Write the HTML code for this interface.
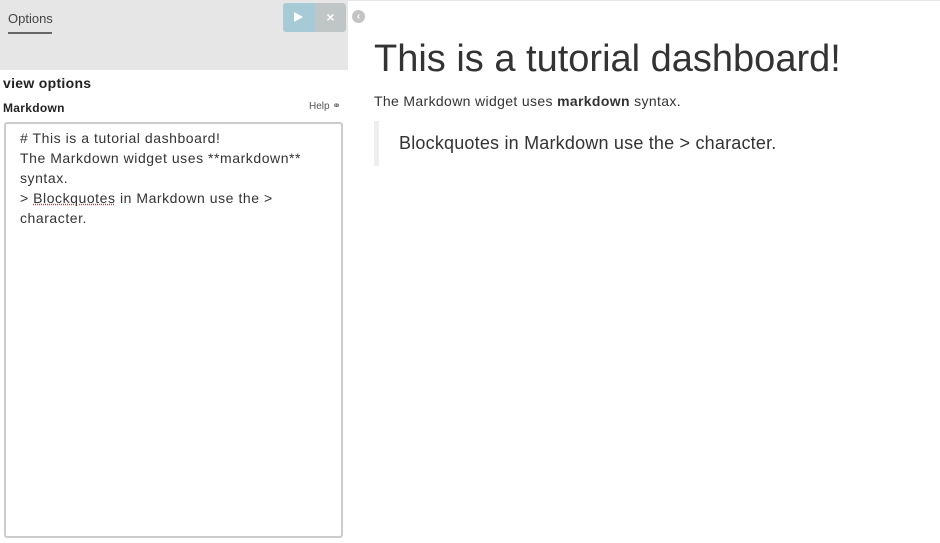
<!DOCTYPE html>
<html><head><style>
*{margin:0;padding:0;box-sizing:border-box}
body{width:940px;height:543px;background:#fff;font-family:"Liberation Sans",sans-serif;color:#333;position:relative;overflow:hidden}
.a{position:absolute}
</style></head><body>
<div class="a" style="left:0;top:0;width:348px;height:70px;background:#e6e6e6"></div>
<div class="a" style="left:348px;top:0;width:592px;height:1px;background:#e6e6e6"></div>
<div class="a" style="left:8px;top:11px;font-size:13px;color:#444">Options</div>
<div class="a" style="left:8px;top:32px;width:44px;height:2px;background:#666"></div>
<div class="a" style="left:283px;top:3px;width:32px;height:29px;background:#a6cbd6;border-radius:3px 0 0 3px"></div>
<div class="a" style="left:294px;top:12px;width:0;height:0;border-left:9px solid #fff;border-top:5px solid transparent;border-bottom:5px solid transparent"></div>
<div class="a" style="left:315px;top:3px;width:31px;height:29px;background:#c0c5c5;border-radius:0 3px 3px 0;color:#fff;font-size:14px;font-weight:bold;text-align:center;line-height:29px">×</div>
<div class="a" style="left:352px;top:10px;width:13px;height:13px;border-radius:50%;background:#c4c4c4;color:#fff;font-size:10px;line-height:13px;text-align:center;font-weight:bold">‹</div>
<div class="a" style="left:3px;top:75px;font-size:14px;font-weight:bold;color:#222;letter-spacing:0.3px">view options</div>
<div class="a" style="left:3px;top:101px;font-size:12px;font-weight:bold;color:#222;letter-spacing:0.3px">Markdown</div>
<div class="a" style="left:309px;top:101px;font-size:10px;color:#555">Help ⚭</div>
<div class="a" style="left:4px;top:122px;width:339px;height:416px;border:2px solid #ccc;border-radius:3px"></div>
<div class="a" style="left:20px;top:128px;font-size:14px;line-height:20px;color:#333;letter-spacing:0.55px">
# This is a tutorial dashboard!<br>The Markdown widget uses **markdown**<br>syntax.<br>&gt; <span style="text-decoration:underline dotted #d33">Blockquotes</span> in Markdown use the &gt;<br>character.</div>
<div class="a" style="left:374px;top:38px;font-size:38px;color:#333;white-space:nowrap">This is a tutorial dashboard!</div>
<div class="a" style="left:374px;top:93px;font-size:14px;color:#333;letter-spacing:0.35px">The Markdown widget uses <b>markdown</b> syntax.</div>
<div class="a" style="left:374px;top:121px;width:5px;height:45px;background:#eee"></div>
<div class="a" style="left:399px;top:133px;font-size:18px;color:#333;letter-spacing:0.2px">Blockquotes in Markdown use the &gt; character.</div>
</body></html>
